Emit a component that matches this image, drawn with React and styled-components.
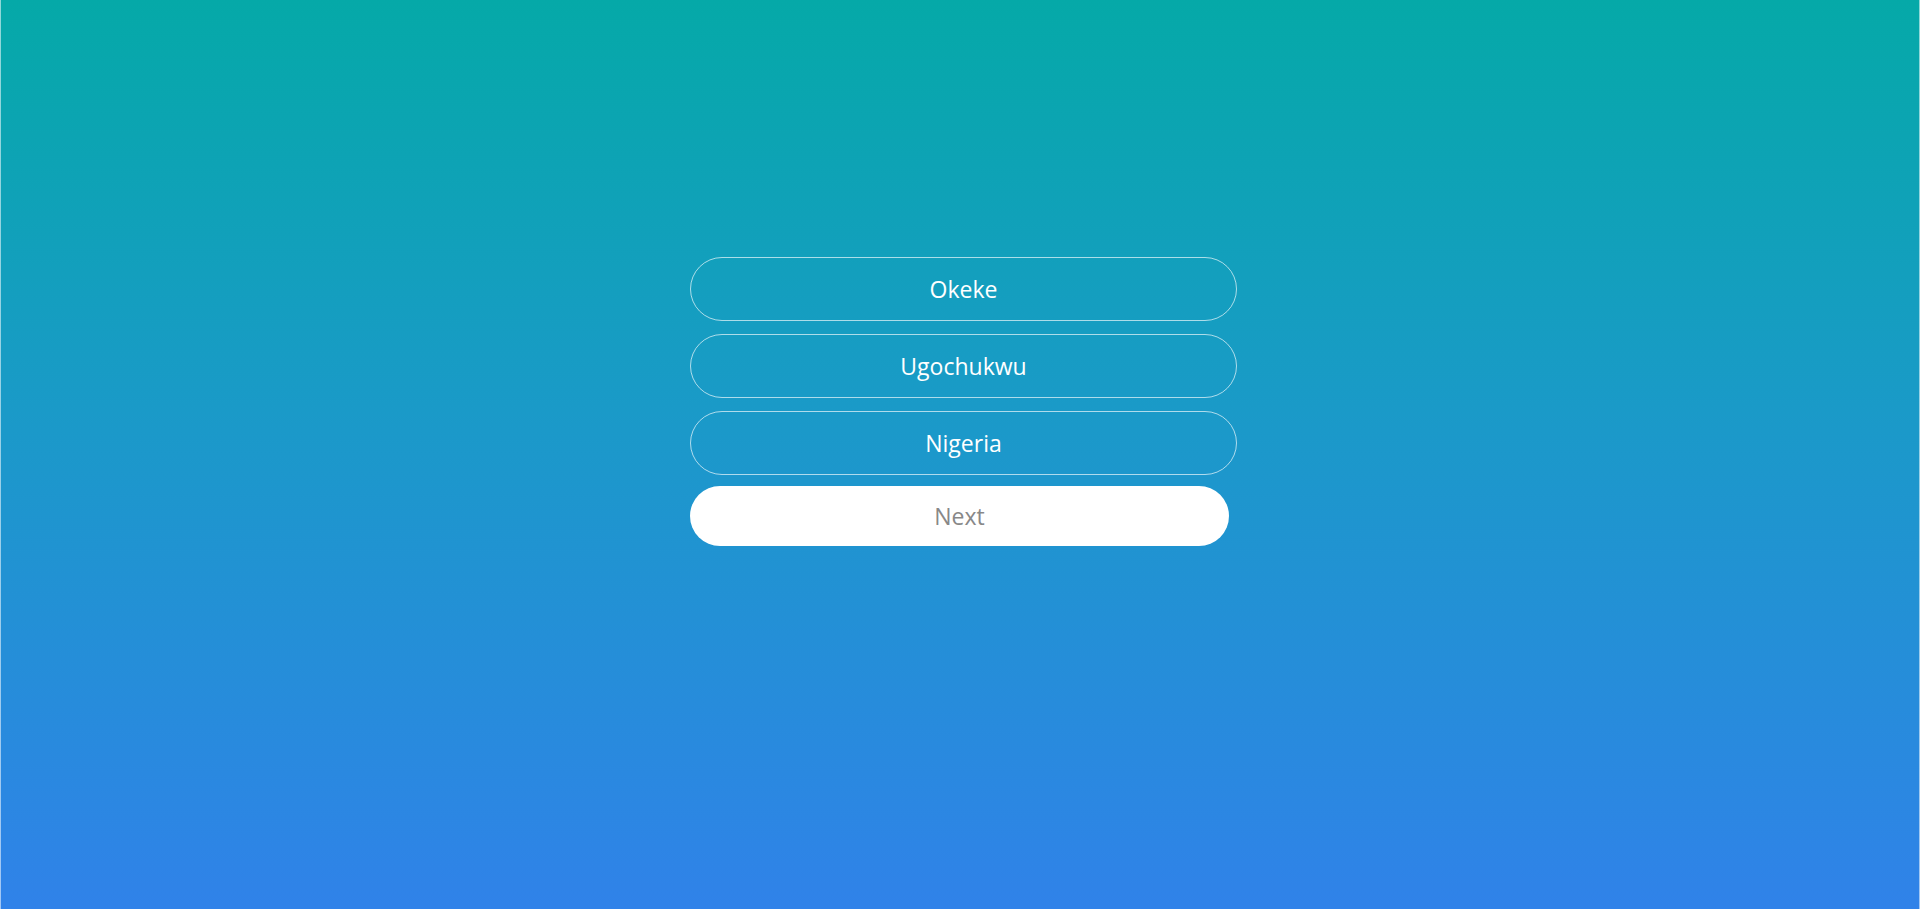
import React from "react"
import styled, { createGlobalStyle } from "styled-components"

const GlobalStyle = createGlobalStyle`
  * { box-sizing: border-box; }
  html, body { margin: 0; padding: 0; }
  body {
    font-family: "Open Sans", "Noto Sans", sans-serif;
  }
`

const Page = styled.div`
  width: 100%;
  height: 909px;
  background: linear-gradient(180deg, #05a9a8 0%, #1a9ac8 45%, #3082e9 100%);
  border-left: 1px solid rgba(255, 255, 255, 0.55);
  border-right: 1px solid rgba(255, 255, 255, 0.55);
  display: flex;
  justify-content: center;
  padding-top: 257px;
`

const Form = styled.form`
  width: 547px;
  margin-left: 7px;
  display: flex;
  flex-direction: column;
`

const Field = styled.input`
  width: 547px;
  height: 64px;
  margin-bottom: 13px;
  border: 1px solid rgba(255, 255, 255, 0.65);
  border-radius: 32px;
  background: transparent;
  color: #fff;
  text-align: center;
  font-family: inherit;
  font-size: 23px;
  font-weight: 500;
  outline: none;
  &::placeholder { color: #fff; }
`

const NextButton = styled.button`
  width: 539px;
  height: 60px;
  margin-top: -2px;
  border: none;
  border-radius: 30px;
  background: #fff;
  color: #888;
  font-family: inherit;
  font-size: 23px;
  cursor: pointer;
`

export default function App() {
  return (
    <>
      <GlobalStyle />
      <Page>
        <Form onSubmit={e => e.preventDefault()}>
          <Field defaultValue="Okeke" />
          <Field defaultValue="Ugochukwu" />
          <Field defaultValue="Nigeria" />
          <NextButton type="submit">Next</NextButton>
        </Form>
      </Page>
    </>
  )
}
